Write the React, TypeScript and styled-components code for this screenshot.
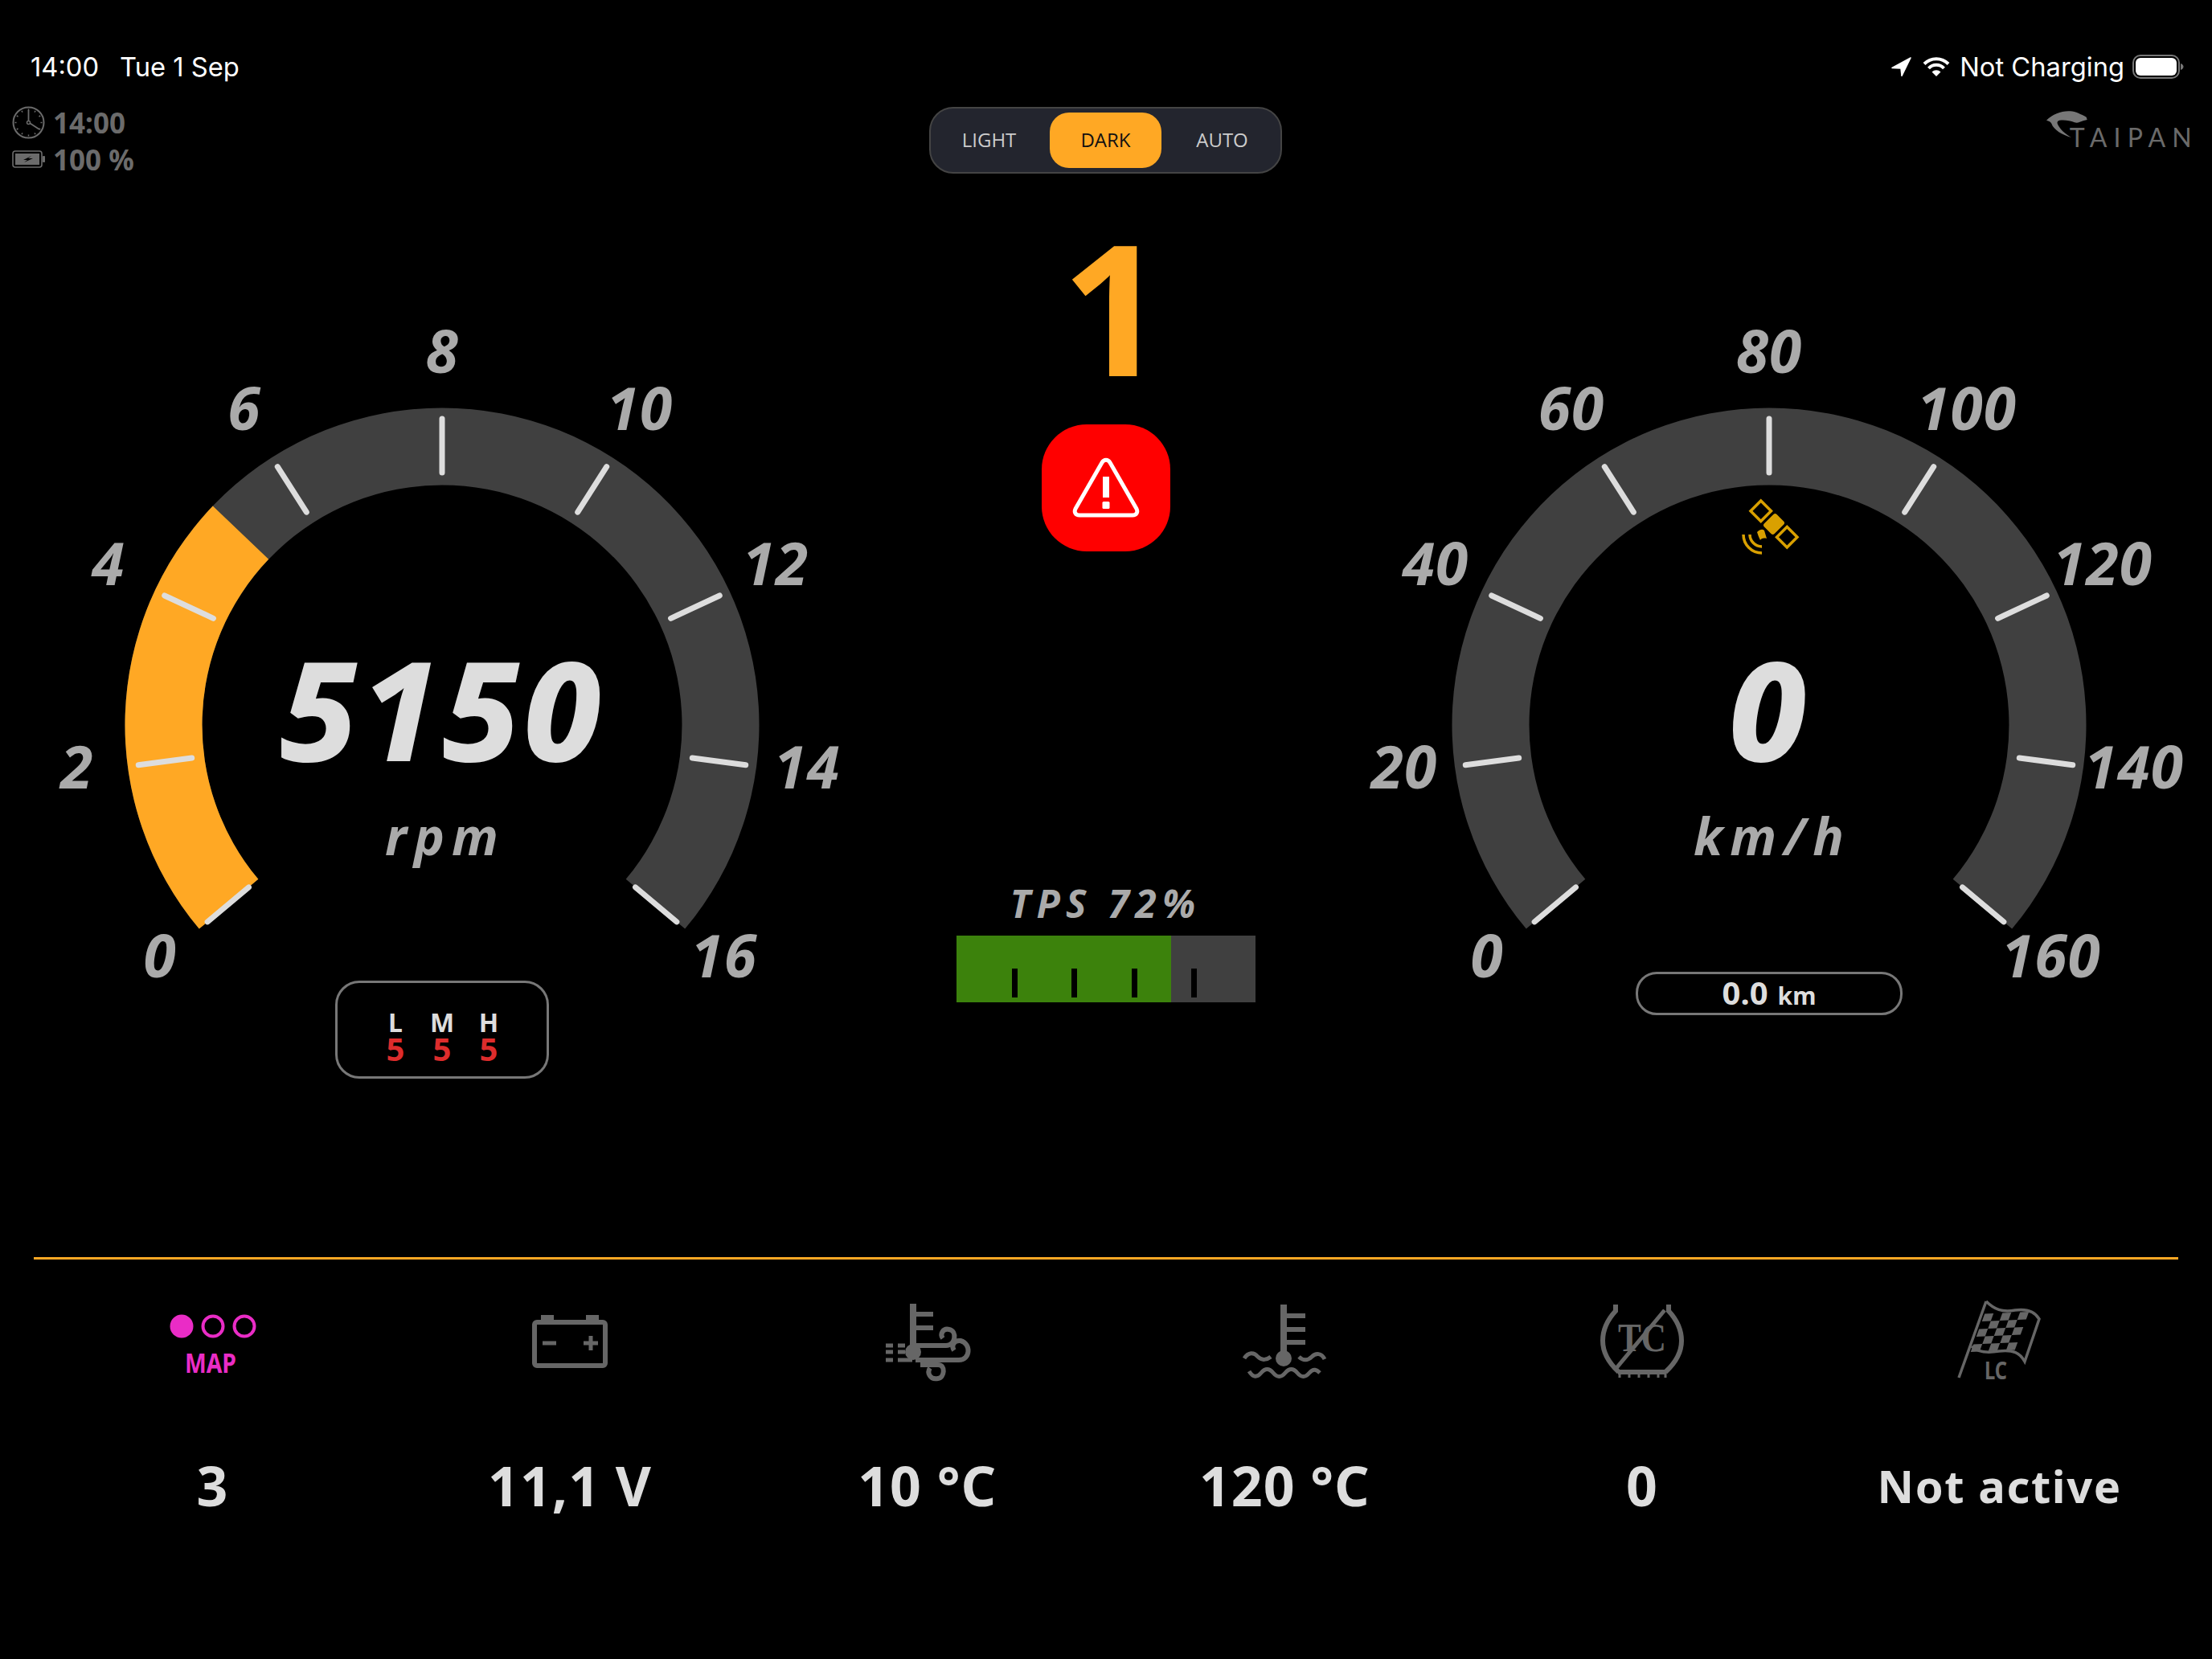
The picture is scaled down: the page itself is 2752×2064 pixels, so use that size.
import * as React from 'react';
import styled, { createGlobalStyle } from 'styled-components';

const ORANGE = '#ffa824';
const TRACK = '#404040';
const ICON = '#666666';
const FONT = '"Noto Sans", "Open Sans", sans-serif';

const GlobalStyle = createGlobalStyle`
  html, body {
    margin: 0;
    padding: 0;
    background: #000;
  }
`;

const Page = styled.div`
  width: 2752px;
  height: 2064px;
  background: #000;
  display: flex;
  flex-direction: column;
  overflow: hidden;
  font-family: ${FONT};
`;

const StatusBar = styled.div`
  height: 133px;
  flex: none;
  box-sizing: border-box;
  padding: 60px 35px 0 38px;
  display: flex;
  justify-content: space-between;
  align-items: flex-start;
  font-family: Inter, sans-serif;
  font-size: 32.7px;
  line-height: 46px;
  color: #fff;
`;

const StatusGroup = styled.div`
  display: flex;
  align-items: center;
  gap: 26px;
`;

const StatusRight = styled.div`
  display: flex;
  align-items: center;
`;

const StatusSpacer = styled.span<{ $w: number }>`
  width: ${(p) => p.$w}px;
`;

const TopRow = styled.div`
  height: 81px;
  flex: none;
  display: grid;
  grid-template-columns: 1156px 439px 1fr;
`;

const TripInfo = styled.div`
  padding: 1px 0 0 15px;
  display: flex;
  flex-direction: column;
  gap: 10px;
`;

const TripLine = styled.div`
  display: flex;
  align-items: center;
  gap: 10px;
  height: 36px;
  font-size: 35px;
  font-weight: 700;
  color: #6b6b6b;
`;

const Segments = styled.div`
  box-sizing: border-box;
  display: grid;
  grid-template-columns: repeat(3, 1fr);
  padding: 5px 0;
  background: #23252e;
  border: 2px solid #444;
  border-radius: 30px;
`;

const Segment = styled.div<{ $active?: boolean }>`
  display: flex;
  align-items: center;
  justify-content: center;
  margin: 0 3px;
  padding-bottom: 2px;
  border-radius: 24px;
  font-family: "Open Sans", sans-serif;
  font-size: 24px;
  color: ${(p) => (p.$active ? '#111' : '#ccc')};
  background: ${(p) => (p.$active ? ORANGE : 'transparent')};
`;

const LogoBox = styled.div`
  display: flex;
  justify-content: flex-end;
  padding: 4px 25px 0 0;
`;

const Logo = styled.div`
  position: relative;
  width: 182px;
  height: 46px;
`;

const LogoSnake = styled.svg`
  position: absolute;
  left: 0;
  top: 0;
`;

const LogoText = styled.div`
  position: absolute;
  right: -8px;
  bottom: 0;
  font-family: Lato, sans-serif;
  font-weight: 400;
  font-size: 32px;
  line-height: 24px;
  letter-spacing: 8.2px;
  color: #6a6a6a;
`;

const Main = styled.div`
  flex: 1;
  min-height: 0;
  display: grid;
  grid-template-columns: 1000px 651px 1fr;
  padding-left: 50px;
`;

const GaugeFace = styled.div`
  position: relative;
  width: 1000px;
  margin-top: 186px;
  display: flex;
  flex-direction: column;
  align-items: center;
`;

const GaugeSvg = styled.svg`
  display: block;
  overflow: visible;
`;

const GaugeLabel = styled.text`
  font-family: ${FONT};
  font-style: italic;
  font-weight: 700;
  font-size: 73px;
  letter-spacing: 1px;
  fill: #aaa;
  text-anchor: middle;
  dominant-baseline: central;
`;

const Readout = styled.div`
  position: absolute;
  left: 0;
  right: 0;
  top: 370px;
  display: flex;
  flex-direction: column;
  align-items: center;
  font-style: italic;
  font-weight: 800;
`;

const ReadoutValue = styled.div`
  font-size: 172px;
  line-height: 220px;
  letter-spacing: 4px;
  color: #ddd;
`;

const ReadoutUnit = styled.div`
  margin-top: 15px;
  padding-left: 8px;
  font-size: 64px;
  font-weight: 700;
  line-height: 70px;
  letter-spacing: 9px;
  color: #aaa;
`;

const ModeBox = styled.div`
  box-sizing: border-box;
  margin-top: 15px;
  width: 266px;
  height: 122px;
  padding-top: 33px;
  border: 3px solid #777;
  border-radius: 30px;
  display: grid;
  grid-template-columns: repeat(3, 58px);
  grid-template-rows: 31px 30px;
  justify-content: center;
  justify-items: center;
  font-weight: 700;
`;

const ModeLetter = styled.div`
  font-size: 32px;
  line-height: 31px;
  color: #ddd;
`;

const ModeLevel = styled.div`
  font-size: 40px;
  line-height: 36px;
  color: #dd2c2c;
`;

const Odometer = styled.div`
  box-sizing: border-box;
  margin-top: 4px;
  width: 332px;
  height: 54px;
  border: 3px solid #777;
  border-radius: 26px;
  display: flex;
  align-items: baseline;
  justify-content: center;
  gap: 12px;
  font-weight: 700;
  color: #ddd;
`;

const OdoValue = styled.span`
  font-size: 40px;
  line-height: 45px;
`;

const OdoUnit = styled.span`
  font-size: 30px;
  line-height: 45px;
`;

const Center = styled.div`
  display: flex;
  flex-direction: column;
  align-items: center;
`;

const Gear = styled.div`
  margin-top: 71px;
  padding-left: 20px;
  height: 190px;
  font-size: 227px;
  line-height: 190px;
  font-weight: 700;
  color: ${ORANGE};
`;

const Alert = styled.div`
  margin-top: 53px;
  width: 160px;
  height: 158px;
  border-radius: 56px;
  background: #f00;
  display: flex;
  align-items: center;
  justify-content: center;
`;

const TpsLabel = styled.div`
  margin-top: 408px;
  font-size: 48px;
  line-height: 60px;
  font-style: italic;
  font-weight: 700;
  letter-spacing: 7.3px;
  color: #aaa;
`;

const TpsBar = styled.div`
  position: relative;
  margin-top: 10px;
  width: 372px;
  height: 83px;
  background: ${TRACK};
`;

const TpsFill = styled.div`
  height: 100%;
  background: #3c820c;
`;

const TpsTick = styled.div`
  position: absolute;
  top: 41px;
  width: 7px;
  height: 36px;
  margin-left: -5px;
  background: #000;
`;

const Footer = styled.div`
  height: 500px;
  flex: none;
  padding: 0 42px;
`;

const Divider = styled.div`
  height: 3px;
  background: ${ORANGE};
`;

const Stats = styled.div`
  display: grid;
  grid-template-columns: repeat(6, 1fr);
  padding-top: 46px;
`;

const Stat = styled.div`
  display: flex;
  flex-direction: column;
  align-items: center;
`;

const StatIcon = styled.div`
  height: 110px;
  display: flex;
  align-items: center;
  justify-content: center;

  svg {
    overflow: visible;
  }
`;

const StatValue = styled.div<{ $small?: boolean }>`
  margin-top: 85px;
  height: 80px;
  font-size: ${(p) => (p.$small ? 56 : 68)}px;
  line-height: 80px;
  font-weight: 700;
  letter-spacing: ${(p) => (p.$small ? 1.6 : 1)}px;
  color: #ddd;
  white-space: pre;
`;

const IconText = styled.text`
  font-weight: 700;
  text-anchor: middle;
`;

const CX = 500;
const CY = 502;

const polar = (r: number, deg: number) => {
  const a = ((deg - 90) * Math.PI) / 180;
  return [CX + r * Math.cos(a), CY + r * Math.sin(a)];
};

const arcPath = (from: number, to: number) => {
  const outer = 394.5;
  const inner = 298.5;
  const [x1, y1] = polar(outer, from);
  const [x2, y2] = polar(outer, to);
  const [x3, y3] = polar(inner, to);
  const [x4, y4] = polar(inner, from);
  const large = to - from > 180 ? 1 : 0;
  return `M${x1} ${y1}A${outer} ${outer} 0 ${large} 1 ${x2} ${y2}L${x3} ${y3}A${inner} ${inner} 0 ${large} 0 ${x4} ${y4}Z`;
};

const Gauge = ({ labels, fraction, children }: { labels: string[]; fraction: number; children?: React.ReactNode }) => {
  const start = -130;
  const sweep = 260;
  const end = start + sweep * fraction;
  return (
    <GaugeSvg width={1000} height={805} viewBox="0 0 1000 805">
      <path d={arcPath(start, start + sweep)} fill={TRACK} />
      {fraction > 0 && <path d={arcPath(start, end)} fill={ORANGE} />}
      {labels.map((label, i) => {
        const deg = start + (sweep / (labels.length - 1)) * i;
        const [x1, y1] = polar(314, deg);
        const [x2, y2] = polar(381, deg);
        const [lx, ly] = polar(458, deg);
        return (
          <g key={label}>
            <line x1={x1} y1={y1} x2={x2} y2={y2} stroke="#ddd" strokeWidth={7} strokeLinecap="round" />
            <GaugeLabel x={lx} y={ly - 9}>{label}</GaugeLabel>
          </g>
        );
      })}
      {children}
    </GaugeSvg>
  );
};

const SAT = '#d9a000';

const Satellite = () => (
  <g>
    <g transform="translate(506 252) rotate(-45)" fill="none" stroke={SAT} strokeWidth={3.5}>
      <rect x={-9} y={-32} width={18} height={18} />
      <rect x={-9} y={14} width={18} height={18} />
      <rect x={-11} y={-9} width={22} height={18} rx={3} fill={SAT} stroke="none" />
    </g>
    <path d="M468 265A23 23 0 0 0 491 288M476 265A15 15 0 0 0 491 280" fill="none" stroke={SAT} strokeWidth={3.5} />
    <path d="M485 262C489 258 492 258 494 260L497 270C493 269 490 270 489 272C487 268 486 265 485 262Z" fill={SAT} />
  </g>
);

const ClockIcon = () => (
  <svg width={41} height={41} viewBox="0 0 41 41" fill="none" stroke="#6b6b6b">
    <circle cx={20.5} cy={20.5} r={19} strokeWidth={2} />
    {Array.from({ length: 12 }).map((_, i) => {
      const a = (i * Math.PI) / 6;
      return (
        <line
          key={i}
          x1={20.5 + 15 * Math.cos(a)}
          y1={20.5 + 15 * Math.sin(a)}
          x2={20.5 + 17 * Math.cos(a)}
          y2={20.5 + 17 * Math.sin(a)}
          strokeWidth={1.5}
        />
      );
    })}
    <circle cx={20.5} cy={20.5} r={2} strokeWidth={1.5} />
    <path d="M20.5 18.5V5M22.5 21.5L34 29" strokeWidth={1.8} />
  </svg>
);

const BatteryCharge = () => (
  <svg width={41} height={22} viewBox="0 0 41 22">
    <rect x={1} y={1} width={36} height={20} rx={3} fill="none" stroke="#6b6b6b" strokeWidth={1.6} />
    <rect x={4} y={4} width={30} height={14} fill="#6b6b6b" />
    <rect x={38} y={7} width={3} height={8} rx={1} fill="#6b6b6b" />
    <path d="M24 7L14 12H19L15 15L26 10H20Z" fill="#000" />
  </svg>
);

const LocationArrow = () => (
  <svg width={25} height={24} viewBox="0 0 25 24">
    <path d="M24 1L1 13.5L12 14L13 23.5Z" fill="#fff" stroke="#fff" strokeWidth={1.5} strokeLinejoin="round" />
  </svg>
);

const Wifi = () => (
  <svg width={34} height={24} viewBox="0 0 34 24" fill="none" stroke="#fff" strokeWidth={4}>
    <path d="M2 8.5A21 21 0 0 1 32 8.5" />
    <path d="M7.5 14A13 13 0 0 1 26.5 14" />
    <path d="M17 24L11.5 18.5A8 8 0 0 1 22.5 18.5Z" fill="#fff" stroke="none" />
  </svg>
);

const IosBattery = () => (
  <svg width={64} height={30} viewBox="0 0 64 30">
    <rect x={1} y={1} width={57} height={28} rx={9} fill="none" stroke="#777" strokeWidth={2} />
    <rect x={4} y={4} width={51} height={22} rx={6} fill="#fff" />
    <path d="M60 11C62.5 12 63.5 13.5 63.5 15C63.5 16.5 62.5 18 60 19Z" fill="#777" />
  </svg>
);

const Snake = () => (
  <LogoSnake width={54} height={36} viewBox="0 0 162 108">
    <path
      d="M3 38C28 14 60 2 92 4C112 5 132 16 152 26L155 36L140 40C130 44 118 50 108 46C90 38 70 36 52 38C46 40 42 43 44 50C52 70 72 88 96 102C62 92 30 74 22 50C20 44 12 40 3 38Z"
      fill="#777"
    />
  </LogoSnake>
);

const WarningIcon = () => (
  <svg width={84} height={76} viewBox="0 0 84 76" fill="none" stroke="#fff">
    <path d="M37 6.5L4 64C2 68 4 72 9 72H75C80 72 82 68 80 64L47 6.5C44.5 2 39.5 2 37 6.5Z" strokeWidth={5} strokeLinejoin="round" />
    <path d="M42 24V50" strokeWidth={8} />
    <rect x={37.5} y={55} width={9} height={9} rx={1.5} fill="#fff" stroke="none" />
  </svg>
);

const MapIcon = () => (
  <svg width={112} height={86} viewBox="0 -10 112 86">
    <circle cx={18} cy={15} r={14.5} fill="#ea2cc6" />
    <circle cx={57} cy={15} r={12.5} fill="none" stroke="#ea2cc6" strokeWidth={4} />
    <circle cx={96} cy={15} r={12.5} fill="none" stroke="#ea2cc6" strokeWidth={4} />
    <IconText x={54} y={73} fontSize={34} fill="#ea2cc6" fontFamily='"Liberation Sans Narrow", "Noto Sans", sans-serif' textLength={64} lengthAdjust="spacingAndGlyphs">MAP</IconText>
  </svg>
);

const CarBattery = () => (
  <svg width={94} height={68} viewBox="0 0 94 68" fill="none" stroke={ICON} strokeWidth={6}>
    <rect x={3} y={11} width={88} height={54} rx={3} />
    <path d="M11 10V2H27V10M67 10V2H83V10" fill={ICON} stroke="none" />
    <path d="M13 37H30M64 37H82M73 28V46" strokeWidth={5} />
  </svg>
);

const AirTemp = () => (
  <svg width={110} height={100} viewBox="0 0 110 100" fill="none" stroke={ICON} strokeWidth={6}>
    <path d="M37 4V60" strokeWidth={8} />
    <path d="M37 17H62M37 34H62" strokeWidth={6} />
    <circle cx={37} cy={64} r={10} fill={ICON} stroke="none" />
    <path d="M40 56H78C90 56 92 38 82 36C74 34 70 42 74 47" />
    <path d="M40 74H94C108 74 110 54 96 50C88 49 84 56 88 62" />
    <path d="M46 80H68C78 80 76 96 68 97C58 99 54 90 58 84" />
    <path d="M3 56H12M18 56H27M3 64H12M18 64H27M3 74H12M18 74H36" strokeWidth={5} />
  </svg>
);

const WaterTemp = () => (
  <svg width={104} height={96} viewBox="0 0 104 96" fill="none" stroke={ICON} strokeWidth={5}>
    <path d="M51 3V62" strokeWidth={8} />
    <path d="M51 17H78M51 34H78M51 50H78" strokeWidth={6} />
    <circle cx={51} cy={70} r={10} fill={ICON} stroke="none" />
    <path d="M2 70C7 62 14 62 19 68C24 73 30 72 35 68" />
    <path d="M70 68C75 73 81 73 86 68C91 63 98 63 102 71" />
    <path d="M8 86C13 94 18 94 23 88C28 82 33 82 38 88C43 94 48 94 53 88C58 82 63 82 68 88C73 94 78 94 83 88C88 82 92 84 96 88" />
  </svg>
);

const TractionIcon = () => (
  <svg width={104} height={96} viewBox="0 0 104 96" fill="none" stroke={ICON} strokeWidth={6}>
    <path d="M19 3V11C7 24 3 36 3 48C3 62 11 76 23 87" />
    <path d="M85 3V11C97 24 101 36 101 48C101 62 93 76 81 87" />
    <path d="M22 87H82" />
    <path d="M24 88V94M36 88V94M48 88V94M60 88V94M72 88V94M81 88V94" strokeWidth={3} />
    <path d="M20 82L80 10" strokeWidth={5} />
    <IconText x={52} y={61} fontSize={50} fontFamily='"Liberation Serif", serif' textLength={60} lengthAdjust="spacingAndGlyphs" fill={ICON} stroke="none">TC</IconText>
  </svg>
);

const CHECKS = Array.from({ length: 5 })
  .flatMap((_, row) => Array.from({ length: 5 }).map((_, col) => ({ row, col })))
  .filter((c) => (c.row + c.col) % 2 === 0)
  .map(({ row, col }) => {
    const x = 38 + col * 11 - row * 3.5;
    const y = 22 - col * 0.5 + row * 9.5;
    const ax = 5.5;
    const ay = -0.25;
    const bx = -1.75;
    const by = 4.75;
    return {
      key: `${row}-${col}`,
      points: `${x - ax - bx},${y - ay - by} ${x + ax - bx},${y + ay - by} ${x + ax + bx},${y + ay + by} ${x - ax + bx},${y - ay + by}`,
    };
  });

const FlagIcon = () => (
  <svg width={106} height={102} viewBox="0 0 106 102" fill="none" stroke={ICON} strokeWidth={3.5}>
    <path d="M2 97L36 2" />
    <path d="M36 2C46 12 56 16 72 13C86 11 96 14 102 24L84 77C78 66 70 62 52 64C40 66 26 66 18 58" />
    {CHECKS.map((c) => (
      <polygon key={c.key} points={c.points} fill={ICON} stroke="none" />
    ))}
    <IconText x={48} y={99} fontSize={30} fontFamily='"Liberation Sans Narrow", "Noto Sans", sans-serif' textLength={28} lengthAdjust="spacingAndGlyphs" fill={ICON} stroke="none">LC</IconText>
  </svg>
);

const STATS: { icon: React.ReactNode; value: string; small?: boolean }[] = [
  { icon: <MapIcon />, value: '3' },
  { icon: <CarBattery />, value: '11,1 V' },
  { icon: <AirTemp />, value: '10 °C' },
  { icon: <WaterTemp />, value: '120 °C' },
  { icon: <TractionIcon />, value: '0' },
  { icon: <FlagIcon />, value: 'Not active', small: true },
];

const RPM_LABELS = ['0', '2', '4', '6', '8', '10', '12', '14', '16'];
const SPEED_LABELS = ['0', '20', '40', '60', '80', '100', '120', '140', '160'];
const TPS_TICKS = [20, 40, 60, 80];
const MODES = ['L', 'M', 'H'];

const App = () => (
  <Page>
    <GlobalStyle />
    <StatusBar>
      <StatusGroup>
        <span>14:00</span>
        <span>Tue 1 Sep</span>
      </StatusGroup>
      <StatusRight>
        <LocationArrow />
        <StatusSpacer $w={14} />
        <Wifi />
        <StatusSpacer $w={12} />
        <span>Not Charging</span>
        <StatusSpacer $w={10} />
        <IosBattery />
      </StatusRight>
    </StatusBar>
    <TopRow>
      <TripInfo>
        <TripLine>
          <ClockIcon />
          14:00
        </TripLine>
        <TripLine>
          <BatteryCharge />
          100 %
        </TripLine>
      </TripInfo>
      <Segments>
        <Segment>LIGHT</Segment>
        <Segment $active>DARK</Segment>
        <Segment>AUTO</Segment>
      </Segments>
      <LogoBox>
        <Logo>
          <Snake />
          <LogoText>TAIPAN</LogoText>
        </Logo>
      </LogoBox>
    </TopRow>
    <Main>
      <div>
        <GaugeFace>
          <Gauge labels={RPM_LABELS} fraction={5.15 / 16} />
          <Readout>
            <ReadoutValue>5150</ReadoutValue>
            <ReadoutUnit>rpm</ReadoutUnit>
          </Readout>
          <ModeBox>
            {MODES.map((m) => (
              <ModeLetter key={m}>{m}</ModeLetter>
            ))}
            {MODES.map((m) => (
              <ModeLevel key={m}>5</ModeLevel>
            ))}
          </ModeBox>
        </GaugeFace>
      </div>
      <Center>
        <Gear>1</Gear>
        <Alert>
          <WarningIcon />
        </Alert>
        <TpsLabel>TPS 72%</TpsLabel>
        <TpsBar>
          <TpsFill style={{ width: '72%' }} />
          {TPS_TICKS.map((t) => (
            <TpsTick key={t} style={{ left: `${t}%` }} />
          ))}
        </TpsBar>
      </Center>
      <div>
        <GaugeFace>
          <Gauge labels={SPEED_LABELS} fraction={0}>
            <Satellite />
          </Gauge>
          <Readout>
            <ReadoutValue>0</ReadoutValue>
            <ReadoutUnit>km/h</ReadoutUnit>
          </Readout>
          <Odometer>
            <OdoValue>0.0</OdoValue>
            <OdoUnit>km</OdoUnit>
          </Odometer>
        </GaugeFace>
      </div>
    </Main>
    <Footer>
      <Divider />
      <Stats>
        {STATS.map((s) => (
          <Stat key={s.value}>
            <StatIcon>{s.icon}</StatIcon>
            <StatValue $small={s.small}>{s.value}</StatValue>
          </Stat>
        ))}
      </Stats>
    </Footer>
  </Page>
);

export default App;
